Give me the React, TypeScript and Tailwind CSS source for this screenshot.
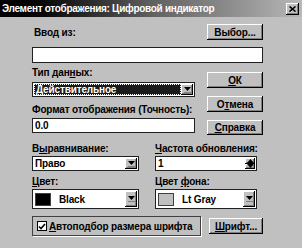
import React from "react";

// 3D bevels used across the dialog
const raised =
  "bg-[#c0c0c0] shadow-[inset_-1px_-1px_0_#000,inset_1px_1px_0_#fff,inset_-2px_-2px_0_#808080]";
const sunken = "bg-white border border-[#202020]";
const txt = "text-[10px] font-bold tracking-[-0.15px] whitespace-nowrap text-black";

function Button({ children, className = "" }: { children: React.ReactNode; className?: string }) {
  return (
    <div className={`${raised} ${txt} flex items-center justify-center ${className}`}>
      {children}
    </div>
  );
}

function Arrow({ up = false }: { up?: boolean }) {
  return (
    <svg width="7" height="4" viewBox="0 0 7 4" className={up ? "rotate-180" : ""}>
      <polygon points="0,0 7,0 3.5,4" fill="#000" />
    </svg>
  );
}

function DropButton() {
  return (
    <div className={`${raised} w-[12px] h-full flex flex-col items-center justify-center gap-[1px]`}>
      <Arrow />
      <div className="w-[7px] h-[1px] bg-[#808080]" />
    </div>
  );
}

function Label({ children, className = "" }: { children: React.ReactNode; className?: string }) {
  return <div className={`${txt} leading-[13px] ${className}`}>{children}</div>;
}

export default function App() {
  return (
    <div
      className="w-[302px] h-[248px] bg-[#c0c0c0] flex flex-col overflow-hidden"
      style={{ fontFamily: '"Liberation Sans", Arial, sans-serif' }}
    >
      {/* Заголовок окна */}
      <div className="h-[17px] flex items-center pl-[2px] pr-[3px] bg-gradient-to-r from-[#000] via-[#606060] to-[#b8b8b8]">
        <span className="text-white text-[10px] font-bold tracking-[-0.3px] whitespace-nowrap">
          Элемент отображения: Цифровой индикатор
        </span>
        <div className={`${raised} ml-auto w-[13px] h-[12px] flex items-center justify-center`}>
          <svg width="7" height="6" viewBox="0 0 7 6">
            <path d="M0.5 0.5 L6.5 5.5 M6.5 0.5 L0.5 5.5" stroke="#000" strokeWidth="1.6" />
          </svg>
        </div>
      </div>

      <div className="flex flex-col pl-[32px] pr-[39px]">
        {/* Ввод из */}
        <div className="flex items-end mt-[7px]">
          <Label className="pl-[2px] mb-[1px]">Ввод из:</Label>
          <Button className="ml-auto w-[56px] h-[16px]">Выбор...</Button>
        </div>
        <div className={`${sunken} mt-[7px] h-[16px]`} />

        {/* Тип данных / Формат + кнопки */}
        <div className="flex">
          <div className="flex flex-col w-[163px]">
            <Label className="mt-[3px]">
              Тип дан<u>н</u>ых:
            </Label>
            <div className={`${sunken} mt-[3px] h-[15px] flex items-center p-[1px]`}>
              <div className="flex-1 h-full bg-[#1a1a1a] outline-1 outline-dotted outline-white -outline-offset-1 flex items-center px-[2px]">
                <span className={`${txt} text-white`}>Действительное</span>
              </div>
              <DropButton />
            </div>
            <Label className="mt-[6px]">Формат отображения (Точность):</Label>
            <div className={`${sunken} mt-[2px] h-[15px] flex items-center px-[2px]`}>
              <span className={txt}>0.0</span>
            </div>
          </div>
          <div className="ml-auto flex flex-col gap-[8px] mt-[9px]">
            <Button className="w-[56px] h-[16px]">
              <u>О</u>К
            </Button>
            <Button className="w-[56px] h-[16px]">
              О<u>т</u>мена
            </Button>
            <Button className="w-[56px] h-[15px]">
              <u>С</u>правка
            </Button>
          </div>
        </div>

        {/* Выравнивание / Частота */}
        <div className="grid grid-cols-[107px_102px] gap-x-[16px] mt-[7px]">
          <Label>
            В<u>ы</u>равнивание:
          </Label>
          <Label>
            <u>Ч</u>астота обновления:
          </Label>
          <div className={`${sunken} mt-[1px] h-[15px] flex items-center pl-[2px] p-[1px]`}>
            <span className={`flex-1 ${txt}`}>Право</span>
            <DropButton />
          </div>
          <div className={`${sunken} mt-[1px] h-[15px] flex items-center pl-[2px] p-[1px]`}>
            <span className={`flex-1 ${txt}`}>1</span>
            <div className="flex flex-col h-full w-[10px]">
              <div className={`${raised} flex-1 flex items-center justify-center`}>
                <Arrow up />
              </div>
              <div className={`${raised} flex-1 flex items-center justify-center`}>
                <Arrow />
              </div>
            </div>
          </div>

          {/* Цвет / Цвет фона */}
          <Label className="mt-[4px]">
            <u>Ц</u>вет:
          </Label>
          <Label className="mt-[4px]">
            Цвет <u>ф</u>она:
          </Label>
          <div className={`${sunken} mt-[1px] h-[20px] flex items-center p-[1px] pl-[2px]`}>
            <div className="w-[16px] h-[13px] bg-black border border-[#404040]" />
            <span className={`flex-1 ml-[8px] ${txt}`}>Black</span>
            <DropButton />
          </div>
          <div className={`${sunken} mt-[1px] h-[20px] flex items-center p-[1px] pl-[2px]`}>
            <div className="w-[16px] h-[13px] bg-[#c0c0c0] border border-[#404040]" />
            <span className={`flex-1 ml-[8px] ${txt}`}>Lt Gray</span>
            <DropButton />
          </div>
        </div>

        {/* Автоподбор + Шрифт */}
        <div className="flex items-center mt-[7px]">
          <div className="w-[169px] h-[20px] border border-[#404040] shadow-[1px_1px_0_#fff] flex items-center pl-[4px] gap-[2px]">
            <div className="w-[10px] h-[10px] bg-white border border-black flex items-center justify-center">
              <svg width="8" height="7" viewBox="0 0 8 7">
                <path d="M1 3.5 L3 5.5 L7 1" stroke="#000" strokeWidth="1.6" fill="none" />
              </svg>
            </div>
            <span className={txt}>
              <u>А</u>втоподбор размера шрифта
            </span>
          </div>
          <Button className="ml-auto w-[54px] h-[16px]">
            <u>Ш</u>рифт...
          </Button>
        </div>
      </div>
    </div>
  );
}
